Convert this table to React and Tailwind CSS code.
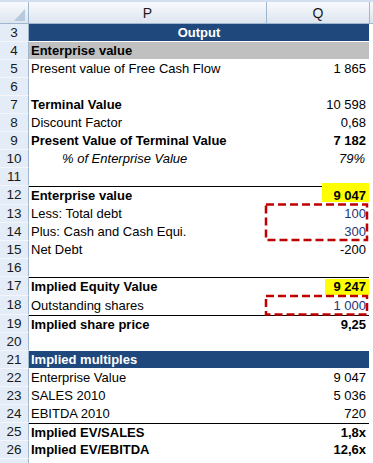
const rows = [
  { n: 3, fill: "blue", label: "Output", center: true },
  { n: 4, fill: "gray", label: "Enterprise value", bold: true },
  { n: 5, label: "Present value of Free Cash Flow", value: "1 865" },
  { n: 6 },
  { n: 7, label: "Terminal Value", bold: true, value: "10 598" },
  { n: 8, label: "Discount Factor", value: "0,68" },
  { n: 9, label: "Present Value of Terminal Value", bold: true, value: "7 182", valueBold: true },
  { n: 10, label: "% of Enterprise Value", italic: true, value: "79%" },
  { n: 11 },
  { n: 12, label: "Enterprise value", bold: true, value: "9 047", valueBold: true, topLine: true, tall: true, mark: "a" },
  { n: 13, label: "Less: Total debt", value: "100", input: true },
  { n: 14, label: "Plus: Cash and Cash Equi.", value: "300", input: true },
  { n: 15, label: "Net Debt", value: "-200" },
  { n: 16 },
  { n: 17, label: "Implied Equity Value", bold: true, value: "9 247", valueBold: true, topLine: true, tall: true, mark: "b" },
  { n: 18, label: "Outstanding shares", value: "1 000", input: true, tall: true },
  { n: 19, label: "Implied share price", bold: true, value: "9,25", valueBold: true, topLine: true },
  { n: 20 },
  { n: 21, fill: "blue", label: "Implied multiples", bold: true },
  { n: 22, label: "Enterprise Value", value: "9 047" },
  { n: 23, label: "SALES 2010", value: "5 036" },
  { n: 24, label: "EBITDA 2010", value: "720" },
  { n: 25, label: "Implied EV/SALES", bold: true, value: "1,8x", valueBold: true, topLine: true },
  { n: 26, label: "Implied EV/EBITDA", bold: true, value: "12,6x", valueBold: true },
  { n: "", key: 27 },
];

function SheetRow({ n, fill, label, center, bold, italic, value, valueBold, input, topLine, tall, mark }) {
  const bg = fill === "blue" ? "bg-[#1f497d] text-white" : fill === "gray" ? "bg-[#c0c0c0]" : "";
  return (
    <div className={`relative flex ${tall ? "h-[19px]" : "h-[18px]"}`}>
      {/* highlighter marks sit over the border but under the number */}
      {mark === "a" && <span className="absolute left-[322px] top-[-3px] w-[47px] h-[19px] bg-[#ffff00]" />}
      {mark === "b" && <span className="absolute left-[325px] top-[2px] w-[44px] h-[16px] bg-[#ffff00]" />}

      <div className="w-[29px] shrink-0 flex items-center justify-center border-r border-r-[#9eb6ce] border-b border-b-[#f3f6fa] bg-[#e4ecf7] text-[13.5px] text-[#1a1a1a]">
        {n}
      </div>

      <div
        className={`w-[340px] shrink-0 flex border-b border-b-white ${topLine ? "border-t border-t-black" : ""} ${bg}`}
      >
        {center ? (
          <div className="flex-1 flex items-center justify-center font-bold">{label}</div>
        ) : (
          <>
            <div
              className={`w-[237px] shrink-0 flex items-center whitespace-nowrap ${italic ? "pl-[33px] italic" : "pl-[2px]"} ${bold ? "font-bold" : ""}`}
            >
              {label}
            </div>
            <div
              className={`flex-1 flex items-center justify-end pr-[3px] ${valueBold ? "font-bold" : ""} ${italic ? "italic pr-[4px]" : ""} ${input ? "text-[#1f3478]" : ""}`}
            >
              <span className={mark ? "relative" : ""}>{value}</span>
            </div>
          </>
        )}
      </div>
    </div>
  );
}

export default function App() {
  return (
    <div className="relative w-[373px] h-[463px] overflow-hidden bg-white font-['Liberation_Sans',Arial,sans-serif] text-[13px] leading-none text-black">
      {/* column headings */}
      <div className="flex h-[24px] border-t-2 border-t-[#d3dfee] border-b border-b-[#9eb6ce] bg-gradient-to-b from-[#f8fafd] to-[#dde5ef] text-[14px] text-[#1a1a1a]">
        <div className="relative w-[29px] shrink-0 border-r border-r-[#9eb6ce]">
          <svg className="absolute left-[14px] top-[7px]" width="12" height="13" viewBox="0 0 12 13">
            <polygon points="11,0 11,12 0,12" fill="#b8c9de" />
          </svg>
        </div>
        <div className="w-[238px] shrink-0 flex items-center justify-center border-r border-r-[#9eb6ce]">P</div>
        <div className="w-[103px] shrink-0 flex items-center justify-center border-r border-r-[#9eb6ce]">Q</div>
        <div className="flex-1" />
      </div>

      {rows.map((r) => (
        <SheetRow key={r.key ?? r.n} {...r} />
      ))}

      {/* dashed review boxes */}
      <svg className="absolute left-0 top-0 pointer-events-none" width="373" height="463">
        <rect x="266" y="204.5" width="101" height="35.5" fill="none" stroke="#c00000" strokeWidth="2.5" strokeDasharray="8 4" />
        <rect x="266" y="296" width="101" height="18.5" fill="none" stroke="#c00000" strokeWidth="2.5" strokeDasharray="8 4" />
      </svg>
    </div>
  );
}
